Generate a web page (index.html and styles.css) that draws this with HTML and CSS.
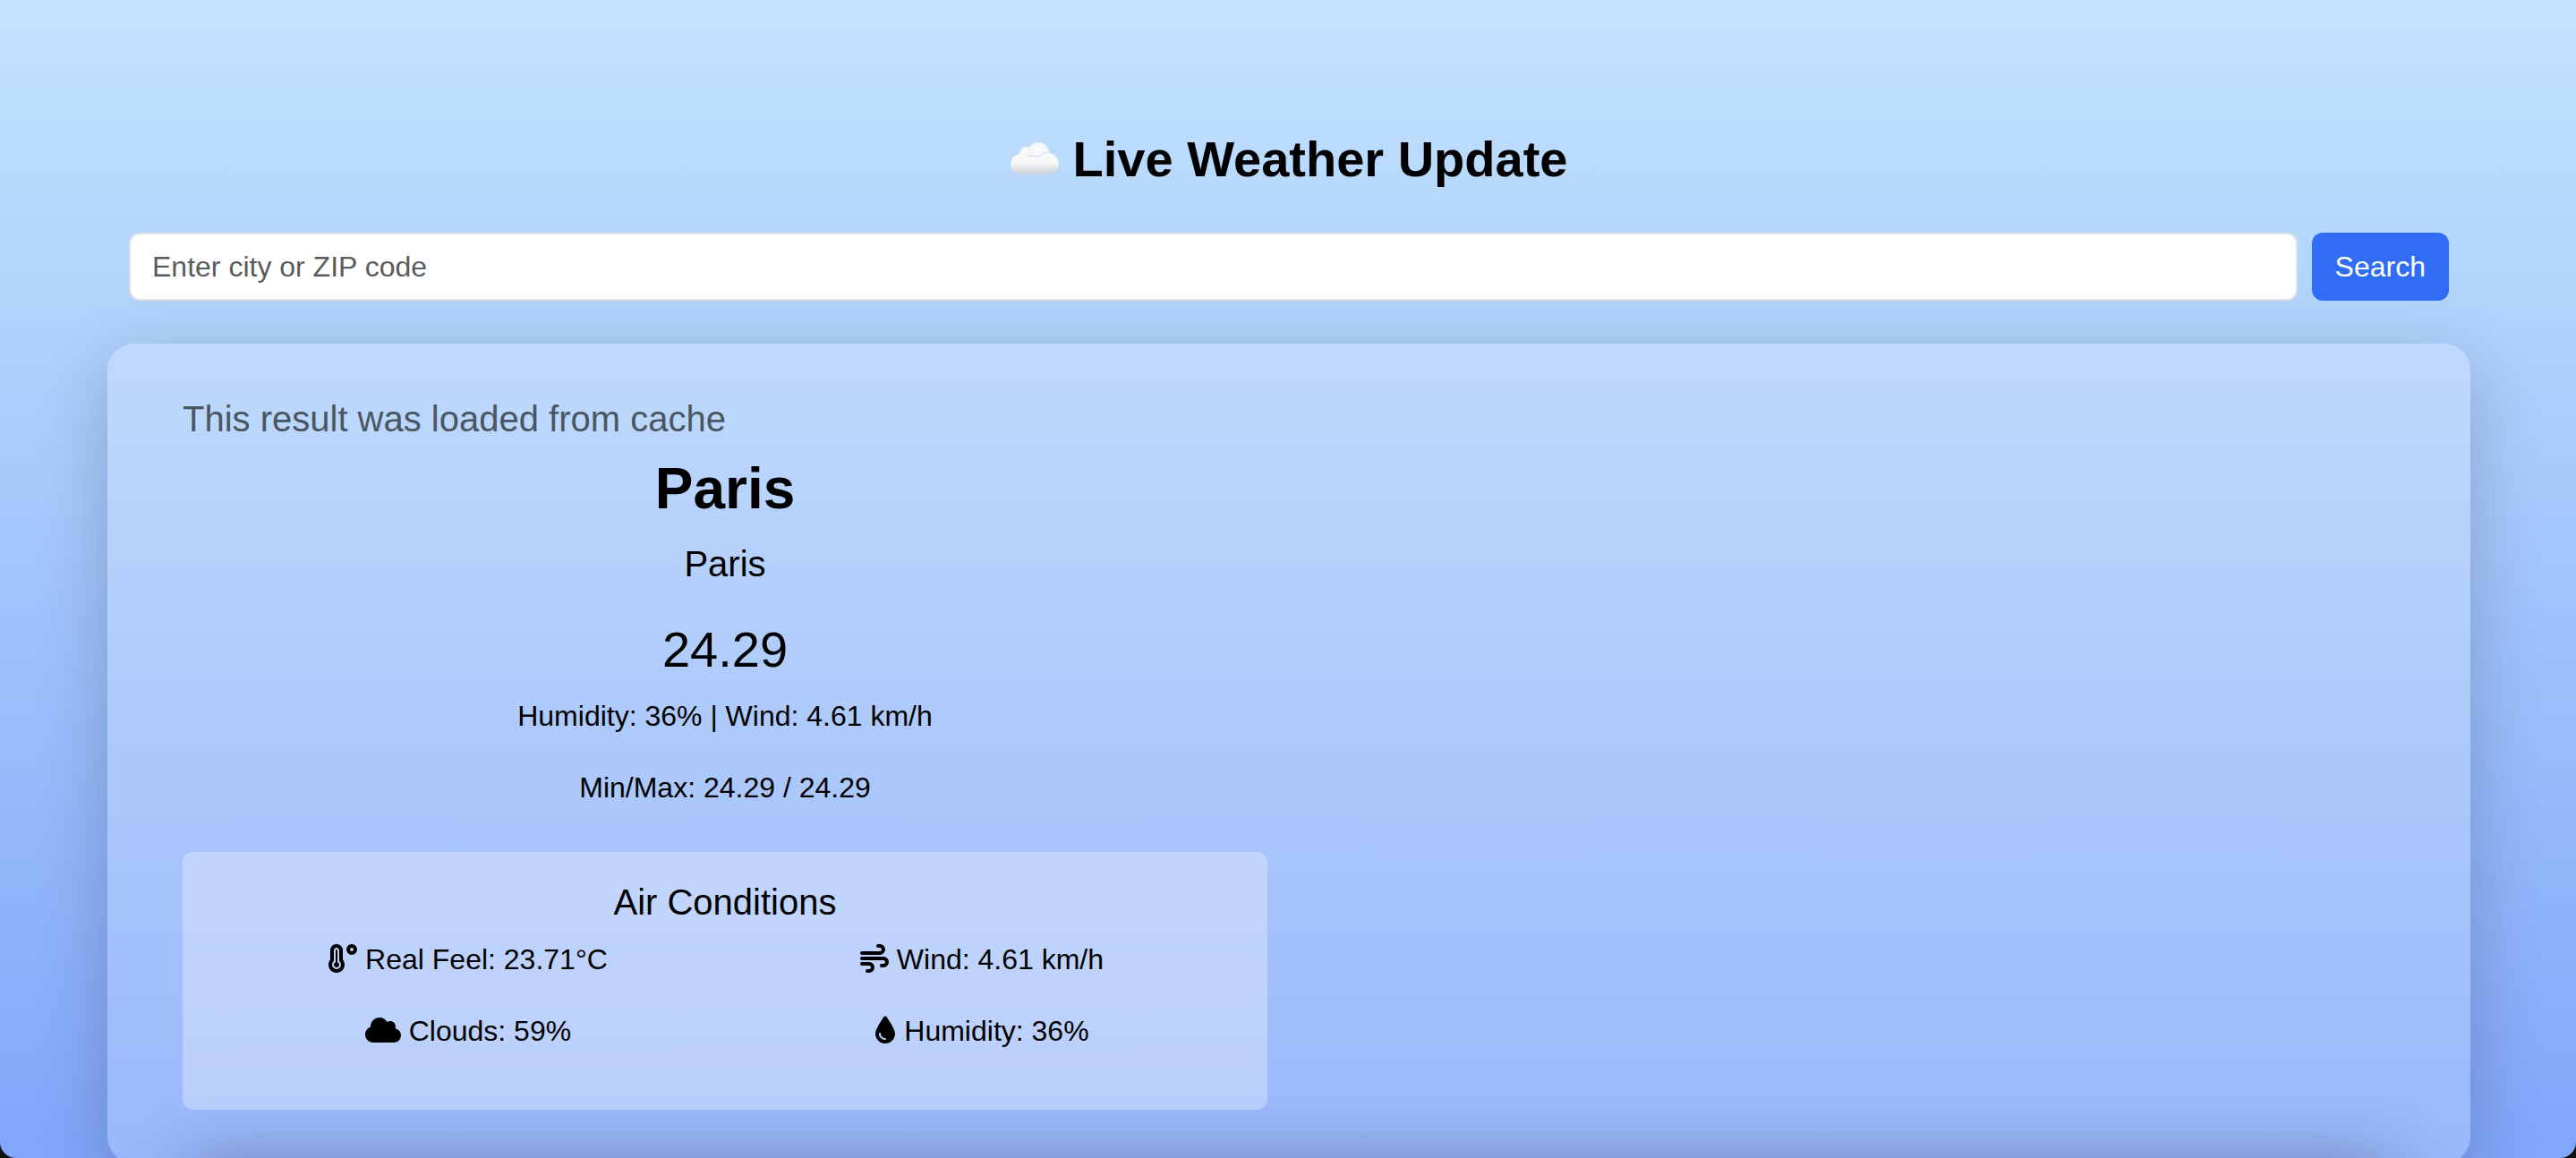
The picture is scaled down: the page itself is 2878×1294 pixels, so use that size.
FILE: index.html
```html
<!DOCTYPE html>
<html lang="en">
<head>
<meta charset="utf-8">
<meta name="viewport" content="width=device-width, initial-scale=1">
<title>Live Weather Update</title>
<link rel="stylesheet" href="styles.css">
</head>
<body>
<main class="page">
  <h1 class="title">
    <svg class="title-cloud" viewBox="0 0 54 36" aria-hidden="true">
      <defs>
        <linearGradient id="puff" gradientUnits="userSpaceOnUse" x1="0" y1="11" x2="0" y2="36">
          <stop offset="0" stop-color="#fcfdfd"/>
          <stop offset="0.5" stop-color="#f3f4f6"/>
          <stop offset="1" stop-color="#c9cfd7"/>
        </linearGradient>
        <radialGradient id="back" cx="0.5" cy="0.35" r="0.65">
          <stop offset="0" stop-color="#fcfdfd"/>
          <stop offset="0.7" stop-color="#f1f3f5"/>
          <stop offset="1" stop-color="#d9dfe6"/>
        </radialGradient>
      </defs>
      <circle cx="31" cy="12" r="12" fill="url(#back)"/>
      <circle cx="17" cy="12" r="7" fill="url(#back)"/>
      <path fill="url(#puff)" d="M12 36C4 36 0 31 0 24C0 18 5 13 12 13C15 13 17 15 19 17C22 15 28 15 31 17C33 14 37 12 42 12C49 12 54 18 54 24C54 31 49 36 42 36Z"/>
      <path fill="none" stroke="#d5dae1" stroke-width="1" d="M19 17C22 15 28 15 31 17C33 14 37 12 42 12"/>
    </svg>
    Live Weather Update
  </h1>

  <form class="search">
    <input class="search-input" type="text" placeholder="Enter city or ZIP code" aria-label="City or ZIP code">
    <button class="search-button" type="button">Search</button>
  </form>

  <section class="card">
    <div class="current">
      <p class="cache-note">This result was loaded from cache</p>
      <h2 class="city">Paris</h2>
      <p class="place">Paris</p>
      <p class="temperature">24.29</p>
      <p class="line">Humidity: 36% | Wind: 4.61 km/h</p>
      <p class="line">Min/Max: 24.29 / 24.29</p>

      <div class="air">
        <h3 class="air-title">Air Conditions</h3>
        <div class="air-grid">
          <p class="line">
            <svg class="icon" viewBox="0 0 512 512" aria-hidden="true"><path fill-rule="evenodd" d="M144 0C82 0 32 50 32 112V276C12 302 0 334 0 368C0 448 64 512 144 512S288 448 288 368C288 334 276 302 256 276V112C256 50 206 0 144 0ZM144 64C170 64 192 86 192 112V278C192 291 196 304 205 314C217 329 224 348 224 368A80 80 0 0 1 64 368C64 348 71 329 83 314C92 304 96 291 96 278V112C96 86 118 64 144 64Z"/><path d="M128 112a16 16 0 0 1 32 0V323a48 48 0 1 1-32 0Z"/><path fill-rule="evenodd" d="M416 0a96 96 0 1 0 0 192a96 96 0 1 0 0-192ZM416 64a32 32 0 1 1 0 64a32 32 0 1 1 0-64Z"/></svg>
            Real Feel: 23.71°C
          </p>
          <p class="line">
            <svg class="icon" viewBox="0 0 512 512" aria-hidden="true"><path fill="none" stroke="#000" stroke-width="64" stroke-linecap="round" stroke-linejoin="round" d="M320 32H352A64 64 0 0 1 352 160H32M384 384H416A64 64 0 0 0 416 256H32M128 480H160A64 64 0 0 0 160 352H32"/></svg>
            Wind: 4.61 km/h
          </p>
          <p class="line">
            <svg class="icon icon-wide" viewBox="0 0 640 512" aria-hidden="true"><path d="M0 336c0 79.500 64.500 144 144 144H512c70.700 0 128-57.300 128-128c0-61.900-44-113.600-102.400-125.400c4.100-10.700 6.400-22.400 6.400-34.600c0-53-43-96-96-96c-19.700 0-38.100 6-53.300 16.200C367 64.200 315.300 32 256 32C167.600 32 96 103.600 96 192c0 2.700 .1 5.400 .2 8.100C40.200 219.800 0 273.200 0 336Z"/></svg>
            Clouds: 59%
          </p>
          <p class="line">
            <svg class="icon icon-narrow" viewBox="0 0 384 512" aria-hidden="true"><path fill-rule="evenodd" d="M16 319.100C16 245.900 118.300 89.400 166.900 19.300C179.200 1.600 204.800 1.600 217.100 19.300C265.700 89.400 368 245.900 368 319.100C368 417.200 289.200 496 192 496C94.800 496 16 417.200 16 319.100ZM112 319.100C112 311.200 104.800 304 96 304C87.200 304 80 311.200 80 320C80 381.900 130.100 432 192 432C200.800 432 208 424.800 208 416C208 407.200 200.800 400 192 400C147.800 400 112 364.200 112 320V319.100Z"/></svg>
            Humidity: 36%
          </p>
        </div>
      </div>
    </div>
  </section>

  <section class="forecast" aria-label="Forecast"></section>
</main>
</body>
</html>
```
FILE: styles.css
```css
* {
  box-sizing: border-box;
}

html {
  background: #111;
}

body {
  height: 100vh;
  margin: 0;
  overflow: hidden;
  border-radius: 0 0 18px 18px;
  background: linear-gradient(to bottom, #c3e3fd, #81a6fa);
  color: #000;
  font: 32px/48px Arial, "Liberation Sans", sans-serif;
}

h1, h2, h3, p {
  margin: 0;
}

.page {
  margin: 0 118px 0 120px;
  padding-top: 144px;
}

.title {
  display: flex;
  justify-content: center;
  align-items: center;
  gap: 16px;
  margin-bottom: 48px;
  font-size: 56px;
  line-height: 68px;
}

.title-cloud {
  width: 54px;
  height: 36px;
  margin-bottom: 2px;
}

.search {
  display: flex;
  gap: 16px;
  margin-bottom: 48px;
  padding: 0 24px;
}

.search-input,
.search-button {
  padding: 12px 24px;
  border: 2px solid #dee2e6;
  border-radius: 12px;
  font: inherit;
}

.search-input {
  flex: 1;
  min-width: 0;
  background: #fff;
  color: #212529;
}

.search-input::placeholder {
  color: #595c5f;
  opacity: 1;
}

.search-button {
  border-color: #316cf4;
  background: #316cf4;
  color: #fff;
}

.card {
  display: grid;
  grid-template-columns: 1fr 1fr;
  padding: 60px;
  border-radius: 30px;
  background: rgba(255, 255, 255, 0.2);
  box-shadow: 0 20px 80px rgba(0, 0, 0, 0.2);
}

.current {
  padding: 0 24px;
  text-align: center;
}

.cache-note {
  margin-bottom: 16px;
  color: #4b5663;
  font-size: 40px;
  text-align: left;
}

.city {
  margin-bottom: 16px;
  font-size: 64px;
  line-height: 76px;
}

.place {
  margin-bottom: 32px;
  font-size: 40px;
  line-height: 60px;
}

.temperature {
  margin-bottom: 16px;
  font-size: 56px;
  line-height: 68px;
}

.line {
  margin-bottom: 32px;
}

.air {
  margin-top: 48px;
  padding: 32px;
  border-radius: 12px;
  background: rgba(255, 255, 255, 0.3);
}

.air-title {
  margin-bottom: 16px;
  font-size: 40px;
  font-weight: 400;
}

.air-grid {
  display: grid;
  grid-template-columns: 1fr 1fr;
}

.icon {
  width: 32px;
  height: 32px;
  vertical-align: -4px;
}

.icon-wide {
  width: 40px;
}

.icon-narrow {
  width: 24px;
}

.forecast {
  height: 400px;
  margin: 0 84px;
  border-radius: 30px;
  box-shadow: 0 0 80px rgba(0, 0, 0, 0.3);
}
```
